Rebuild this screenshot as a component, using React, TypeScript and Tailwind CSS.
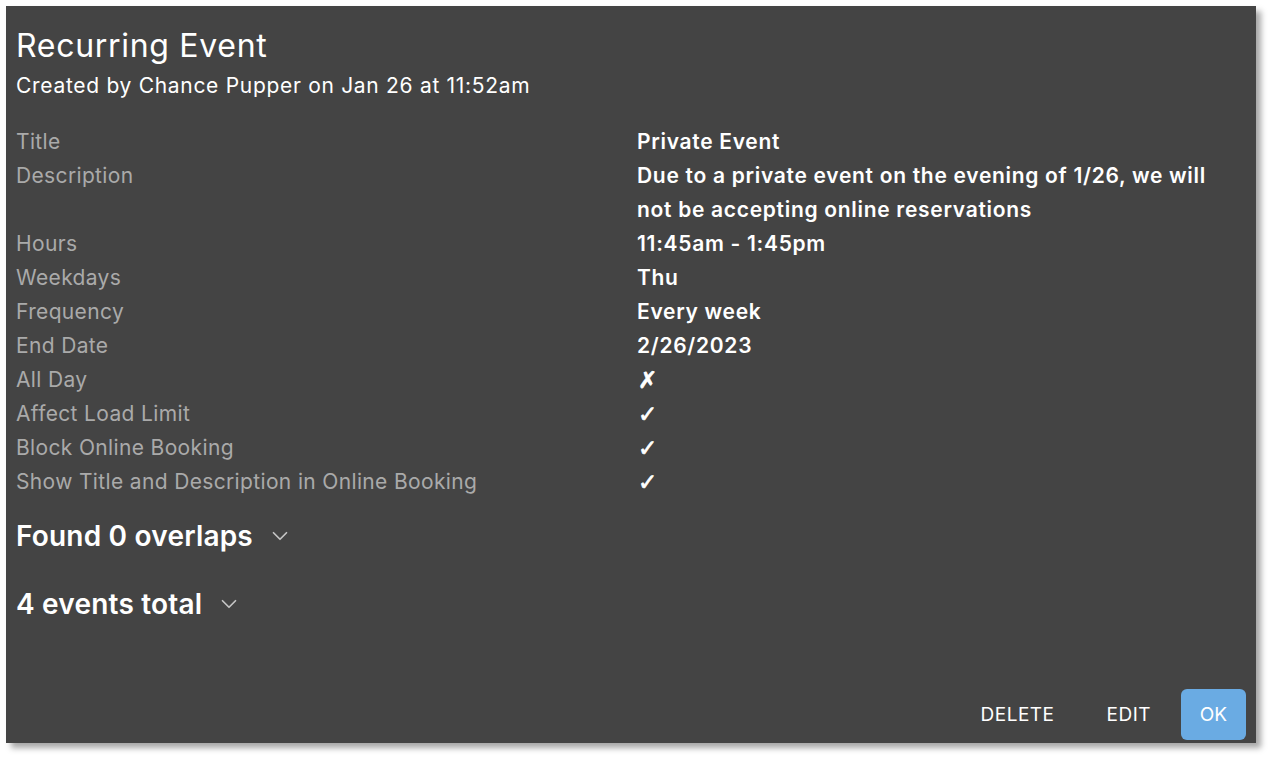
import { ChevronDown } from "lucide-react";

type Field = {
  label: string;
  value: React.ReactNode;
  mark?: boolean;
};

const fields: Field[] = [
  { label: "Title", value: "Private Event" },
  {
    label: "Description",
    value: (
      <>
        Due to a private event on the evening of 1/26, we will
        <br />
        not be accepting online reservations
      </>
    ),
  },
  { label: "Hours", value: "11:45am - 1:45pm" },
  { label: "Weekdays", value: "Thu" },
  { label: "Frequency", value: "Every week" },
  { label: "End Date", value: "2/26/2023" },
  { label: "All Day", value: "✗", mark: true },
  { label: "Affect Load Limit", value: "✓", mark: true },
  { label: "Block Online Booking", value: "✓", mark: true },
  { label: "Show Title and Description in Online Booking", value: "✓", mark: true },
];

function Collapsible({ title }: { title: string }) {
  return (
    <button className="flex items-center gap-[14px] text-[28px] font-semibold leading-[34px] tracking-[0.2px] text-white">
      {title}
      <ChevronDown className="h-[26px] w-[26px] text-[#c4c4c4]" strokeWidth={1.6} />
    </button>
  );
}

export default function App() {
  return (
    <div className="min-h-screen bg-white p-[6px] font-['Inter',sans-serif]">
      <div className="flex h-[737px] w-[1250px] flex-col bg-[#444444] shadow-[5px_5px_6px_rgba(0,0,0,0.35)]">
        <div className="flex-1 px-[10px] pt-[22px]">
          <h1 className="text-[32px] leading-[36px] tracking-[0.7px] text-white">Recurring Event</h1>
          <p className="mt-[8px] text-[21px] leading-[28px] tracking-[0.7px] text-white">
            Created by Chance Pupper on Jan 26 at 11:52am
          </p>

          <div className="mt-[25px] grid grid-cols-[621px_1fr] text-[21px] leading-[34px]">
            {fields.map((field) => (
              <div key={field.label} className="contents">
                <div className="tracking-[0.35px] text-[#aaaaaa]">{field.label}</div>
                <div
                  className={
                    field.mark
                      ? "pl-[1px] font-['DejaVu_Sans',sans-serif] text-[23px] text-white [-webkit-text-stroke:0.7px_white]"
                      : "font-semibold tracking-[0.7px] text-white"
                  }
                >
                  {field.value}
                </div>
              </div>
            ))}
          </div>

          <div className="mt-[20px] flex flex-col gap-[34px]">
            <Collapsible title="Found 0 overlaps" />
            <Collapsible title="4 events total" />
          </div>
        </div>

        <div className="flex items-center justify-end gap-2 px-[10px] pb-[2px]">
          <button className="px-[22px] py-3 text-[19px] uppercase tracking-[0.5px] text-white">Delete</button>
          <button className="px-[22px] py-3 text-[19px] uppercase tracking-[0.5px] text-white">Edit</button>
          <button className="h-[51px] w-[65px] rounded-md bg-[#6aabe3] text-[19px] uppercase text-white">
            OK
          </button>
        </div>
      </div>
    </div>
  );
}
